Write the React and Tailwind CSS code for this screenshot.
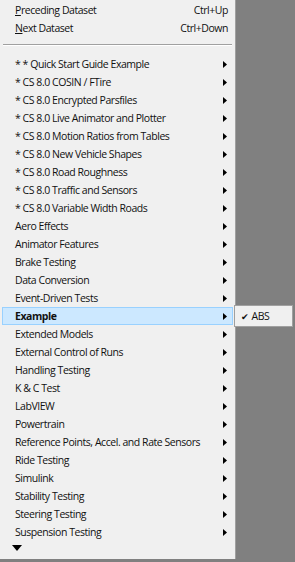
const starred = [
  "* * Quick Start Guide Example",
  "* CS 8.0 COSIN / FTire",
  "* CS 8.0 Encrypted Parsfiles",
  "* CS 8.0 Live Animator and Plotter",
  "* CS 8.0 Motion Ratios from Tables",
  "* CS 8.0 New Vehicle Shapes",
  "* CS 8.0 Road Roughness",
  "* CS 8.0 Traffic and Sensors",
  "* CS 8.0 Variable Width Roads",
];

const groups = [
  "Aero Effects",
  "Animator Features",
  "Brake Testing",
  "Data Conversion",
  "Event-Driven Tests",
  "Example",
  "Extended Models",
  "External Control of Runs",
  "Handling Testing",
  "K & C Test",
  "LabVIEW",
  "Powertrain",
  "Reference Points, Accel. and Rate Sensors",
  "Ride Testing",
  "Simulink",
  "Stability Testing",
  "Steering Testing",
  "Suspension Testing",
];

function Arrow() {
  return (
    <svg width="4" height="7" viewBox="0 0 4 7" className="shrink-0">
      <path d="M0 0 L4 3.5 L0 7 Z" fill="#000" />
    </svg>
  );
}

function Item({ label, active }) {
  return (
    <div
      className={
        "h-[18px] flex items-center pl-[12px] pr-[5px] border " +
        (active ? "bg-[#cce8ff] border-[#99d1ff]" : "border-transparent")
      }
    >
      <span className={"flex-1 whitespace-nowrap " + (active ? "font-bold" : "")}>{label}</span>
      <Arrow />
    </div>
  );
}

export default function App() {
  return (
    <div className="w-[295px] h-[562px] bg-[#808080] flex items-start text-[10.5px] tracking-[-0.45px] text-[#111] overflow-hidden font-['Open_Sans',sans-serif]">
      <div className="w-[236px] h-[559px] bg-[#f0f0f0] border-r border-[#a0a0a0] flex flex-col px-[2px] pt-[1px] leading-none">
        <div className="h-[18px] flex items-center pl-[13px] pr-[5px]">
          <span className="flex-1">
            <u>P</u>receding Dataset
          </span>
          <span>Ctrl+Up</span>
        </div>
        <div className="h-[18px] flex items-center pl-[13px] pr-[5px]">
          <span className="flex-1">
            <u>N</u>ext Dataset
          </span>
          <span>Ctrl+Down</span>
        </div>
        <div className="my-[7px] mx-[1px] border-t border-[#a0a0a0] border-b border-b-white" />
        <div className="h-[2px]" />
        {starred.map((s) => (
          <Item key={s} label={s} />
        ))}
        {groups.map((g) => (
          <div key={g} className="relative">
            <Item label={g} active={g === "Example"} />
            {g === "Example" && (
              <div className="absolute left-[232px] top-[-2px] w-[59px] h-[22px] bg-[#f0f0f0] border border-[#a0a0a0] flex items-center pl-[6px]">
                <span className="text-[9px] mr-[3px]">✔</span>
                <span>ABS</span>
              </div>
            )}
          </div>
        ))}
        <div className="pl-[10px] pt-[4px]">
          <svg width="10" height="6" viewBox="0 0 10 6">
            <path d="M0 0 L10 0 L5 6 Z" fill="#000" />
          </svg>
        </div>
      </div>
    </div>
  );
}
